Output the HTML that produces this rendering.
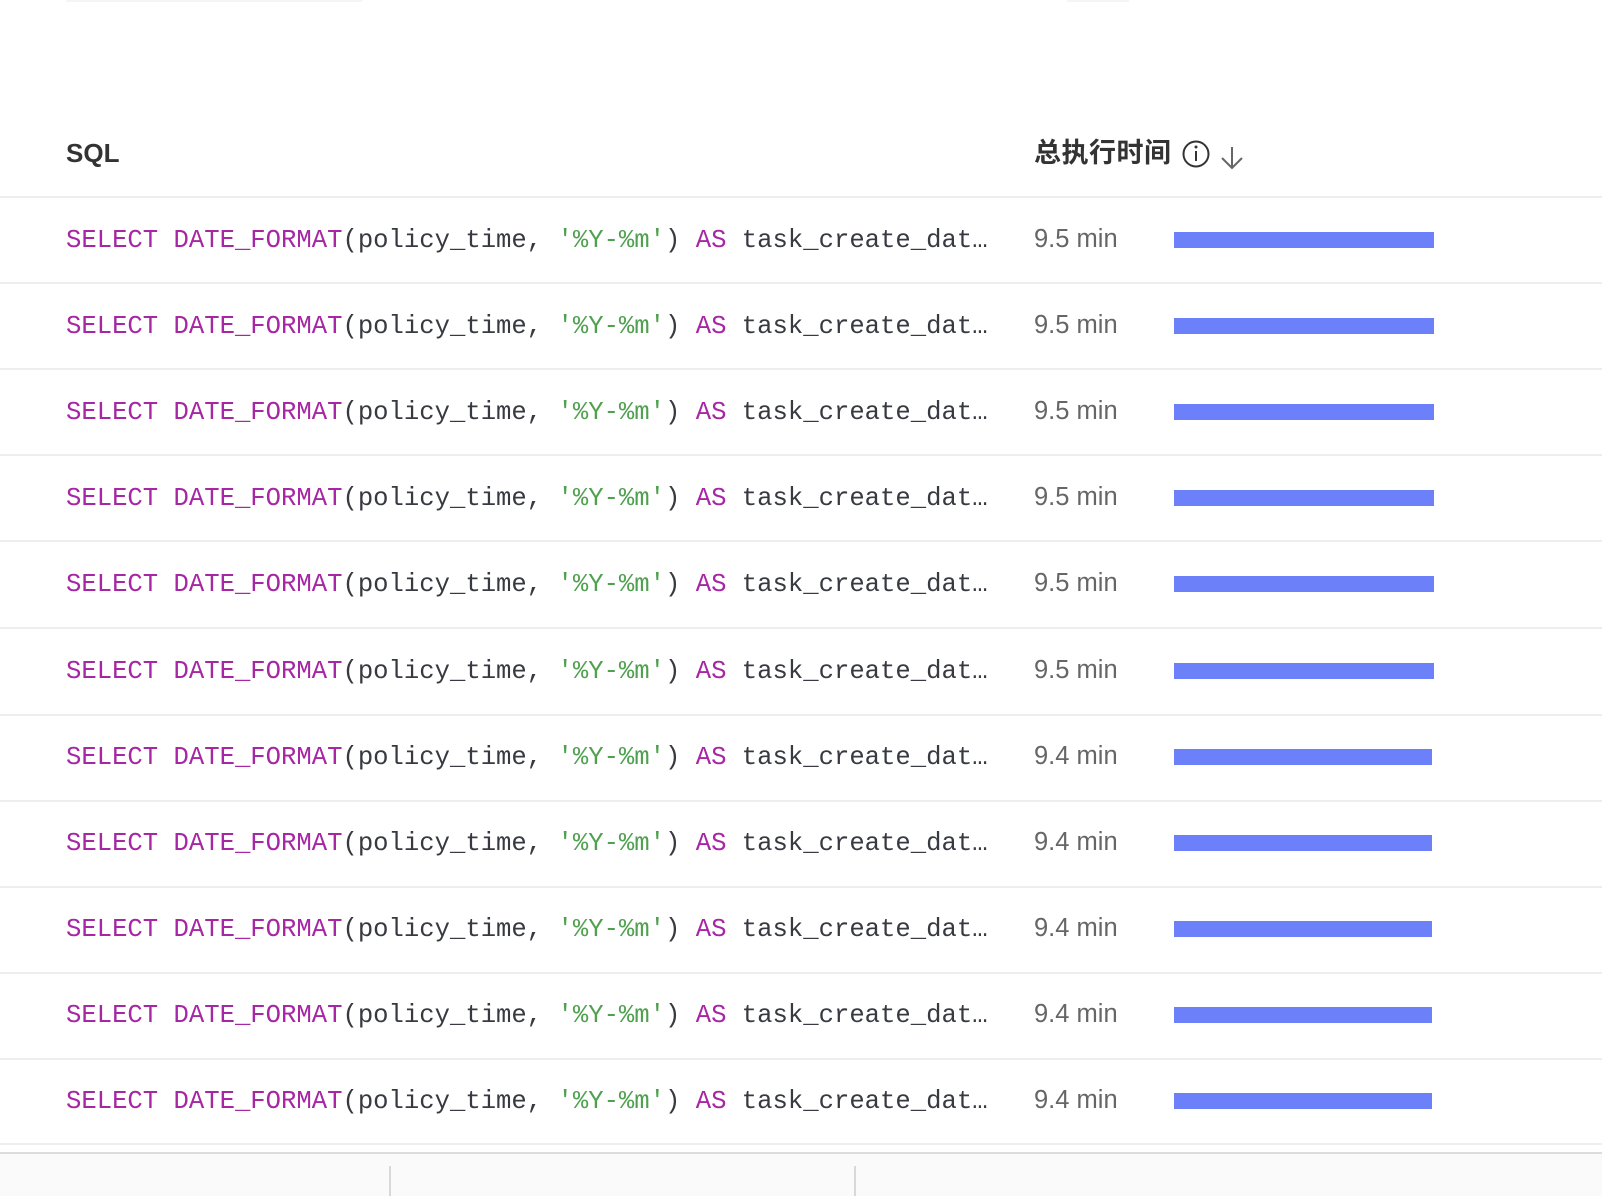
<!DOCTYPE html>
<html><head><meta charset="utf-8"><style>
html,body{margin:0;padding:0;background:#fff;width:1602px;height:1196px;overflow:hidden;position:relative;font-family:"Liberation Sans","Noto Sans CJK SC",sans-serif}
.hd{position:absolute;top:128px;font-size:26px;color:#333;font-weight:bold;line-height:50px}
.line{position:absolute;left:0;width:1602px;height:2px;background:#eeeeee}
.row{position:absolute;left:0;width:1602px;height:86px}
.sql{position:absolute;left:66px;top:1px;line-height:86px;font-family:"Liberation Mono",monospace;font-size:25.6px;color:#383a42;white-space:pre}
.k{color:#a626a4}.s{color:#50a14f}
.t{position:absolute;left:1034px;top:-1px;line-height:86px;font-size:25.5px;color:#666}
.bar{position:absolute;left:1174px;top:35px;height:16px;background:#6b80f9}
</style></head><body>
<div style="position:absolute;left:66px;top:0;width:296px;height:2px;background:#f5f5f5"></div>
<div style="position:absolute;left:1067px;top:0;width:62px;height:2px;background:#f5f5f5"></div>
<div class="hd" style="left:66px">SQL</div>
<div class="hd" style="left:1034px;font-size:27px;letter-spacing:0.5px">总执行时间</div>
<svg style="position:absolute;left:1181px;top:139px" width="70" height="34" viewBox="0 0 70 34">
<circle cx="15" cy="15" r="12.5" fill="none" stroke="#333" stroke-width="2"/>
<line x1="15" y1="12" x2="15" y2="22" stroke="#333" stroke-width="2"/>
<circle cx="15" cy="8" r="1.5" fill="#333"/>
<path d="M51 8 V29 M41 19 L51 29 L61 19" fill="none" stroke="#666" stroke-width="2"/>
</svg>
<div class="line" style="top:196px"></div>
<div class="row" style="top:197px"><div class="sql"><span class="k">SELECT DATE_FORMAT</span>(policy_time, <span class="s">'%Y-%m'</span>) <span class="k">AS</span> task_create_dat…</div><div class="t">9.5 min</div><div class="bar" style="width:260px"></div></div>
<div class="line" style="top:282px"></div>
<div class="row" style="top:283px"><div class="sql"><span class="k">SELECT DATE_FORMAT</span>(policy_time, <span class="s">'%Y-%m'</span>) <span class="k">AS</span> task_create_dat…</div><div class="t">9.5 min</div><div class="bar" style="width:260px"></div></div>
<div class="line" style="top:368px"></div>
<div class="row" style="top:369px"><div class="sql"><span class="k">SELECT DATE_FORMAT</span>(policy_time, <span class="s">'%Y-%m'</span>) <span class="k">AS</span> task_create_dat…</div><div class="t">9.5 min</div><div class="bar" style="width:260px"></div></div>
<div class="line" style="top:454px"></div>
<div class="row" style="top:455px"><div class="sql"><span class="k">SELECT DATE_FORMAT</span>(policy_time, <span class="s">'%Y-%m'</span>) <span class="k">AS</span> task_create_dat…</div><div class="t">9.5 min</div><div class="bar" style="width:260px"></div></div>
<div class="line" style="top:540px"></div>
<div class="row" style="top:541px"><div class="sql"><span class="k">SELECT DATE_FORMAT</span>(policy_time, <span class="s">'%Y-%m'</span>) <span class="k">AS</span> task_create_dat…</div><div class="t">9.5 min</div><div class="bar" style="width:260px"></div></div>
<div class="line" style="top:627px"></div>
<div class="row" style="top:628px"><div class="sql"><span class="k">SELECT DATE_FORMAT</span>(policy_time, <span class="s">'%Y-%m'</span>) <span class="k">AS</span> task_create_dat…</div><div class="t">9.5 min</div><div class="bar" style="width:260px"></div></div>
<div class="line" style="top:714px"></div>
<div class="row" style="top:714px"><div class="sql"><span class="k">SELECT DATE_FORMAT</span>(policy_time, <span class="s">'%Y-%m'</span>) <span class="k">AS</span> task_create_dat…</div><div class="t">9.4 min</div><div class="bar" style="width:258px"></div></div>
<div class="line" style="top:800px"></div>
<div class="row" style="top:800px"><div class="sql"><span class="k">SELECT DATE_FORMAT</span>(policy_time, <span class="s">'%Y-%m'</span>) <span class="k">AS</span> task_create_dat…</div><div class="t">9.4 min</div><div class="bar" style="width:258px"></div></div>
<div class="line" style="top:886px"></div>
<div class="row" style="top:886px"><div class="sql"><span class="k">SELECT DATE_FORMAT</span>(policy_time, <span class="s">'%Y-%m'</span>) <span class="k">AS</span> task_create_dat…</div><div class="t">9.4 min</div><div class="bar" style="width:258px"></div></div>
<div class="line" style="top:972px"></div>
<div class="row" style="top:972px"><div class="sql"><span class="k">SELECT DATE_FORMAT</span>(policy_time, <span class="s">'%Y-%m'</span>) <span class="k">AS</span> task_create_dat…</div><div class="t">9.4 min</div><div class="bar" style="width:258px"></div></div>
<div class="line" style="top:1058px"></div>
<div class="row" style="top:1058px"><div class="sql"><span class="k">SELECT DATE_FORMAT</span>(policy_time, <span class="s">'%Y-%m'</span>) <span class="k">AS</span> task_create_dat…</div><div class="t">9.4 min</div><div class="bar" style="width:258px"></div></div>
<div class="line" style="top:1143px"></div>
<div style="position:absolute;left:0;top:1152px;width:1602px;height:44px;background:#fafafa;border-top:2px solid #dcdcdf"></div>
<div style="position:absolute;left:389px;top:1166px;width:2px;height:30px;background:#d8d8d8"></div>
<div style="position:absolute;left:854px;top:1166px;width:2px;height:30px;background:#d8d8d8"></div>
</body></html>
